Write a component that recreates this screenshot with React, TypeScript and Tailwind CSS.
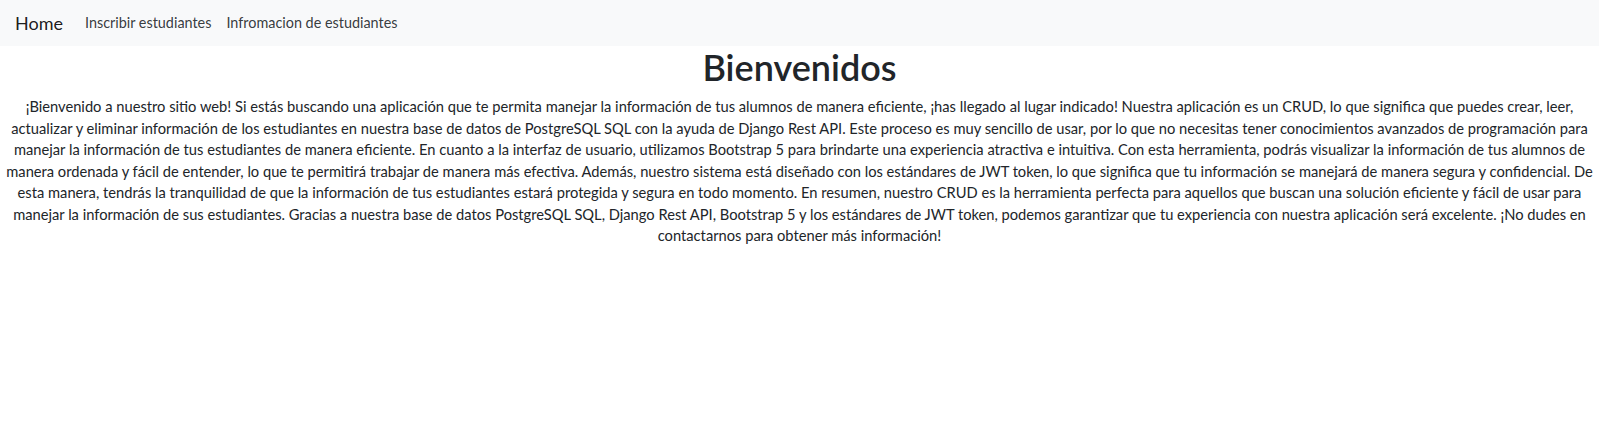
import React from "react";

const lines = [
  "¡Bienvenido a nuestro sitio web! Si estás buscando una aplicación que te permita manejar la información de tus alumnos de manera eficiente, ¡has llegado al lugar indicado! Nuestra aplicación es un CRUD, lo que significa que puedes crear, leer,",
  "actualizar y eliminar información de los estudiantes en nuestra base de datos de PostgreSQL SQL con la ayuda de Django Rest API. Este proceso es muy sencillo de usar, por lo que no necesitas tener conocimientos avanzados de programación para",
  "manejar la información de tus estudiantes de manera eficiente. En cuanto a la interfaz de usuario, utilizamos Bootstrap 5 para brindarte una experiencia atractiva e intuitiva. Con esta herramienta, podrás visualizar la información de tus alumnos de",
  "manera ordenada y fácil de entender, lo que te permitirá trabajar de manera más efectiva. Además, nuestro sistema está diseñado con los estándares de JWT token, lo que significa que tu información se manejará de manera segura y confidencial. De",
  "esta manera, tendrás la tranquilidad de que la información de tus estudiantes estará protegida y segura en todo momento. En resumen, nuestro CRUD es la herramienta perfecta para aquellos que buscan una solución eficiente y fácil de usar para",
  "manejar la información de sus estudiantes. Gracias a nuestra base de datos PostgreSQL SQL, Django Rest API, Bootstrap 5 y los estándares de JWT token, podemos garantizar que tu experiencia con nuestra aplicación será excelente. ¡No dudes en",
  "contactarnos para obtener más información!",
];

export default function App() {
  return (
    <div className="min-h-[443px] bg-white text-[#212529] font-['Lato',sans-serif]">
      <nav className="flex h-[46px] items-center bg-[#f8f9fa] px-[15px]">
        <a className="mr-[22px] text-[18px] leading-none text-black/90">Home</a>
        <div className="flex gap-[15px] text-[14.4px] text-[#212529]/90">
          <a>Inscribir estudiantes</a>
          <a>Infromacion de estudiantes</a>
        </div>
      </nav>
      <h1 className="mb-[7px] text-center text-[36px] font-semibold leading-[1.2]">Bienvenidos</h1>
      <div className="flex flex-col items-center text-[14.7px] leading-[21.5px]">
        {lines.map((l, i) => (
          <p key={i} className="whitespace-nowrap">{l}</p>
        ))}
      </div>
    </div>
  );
}
